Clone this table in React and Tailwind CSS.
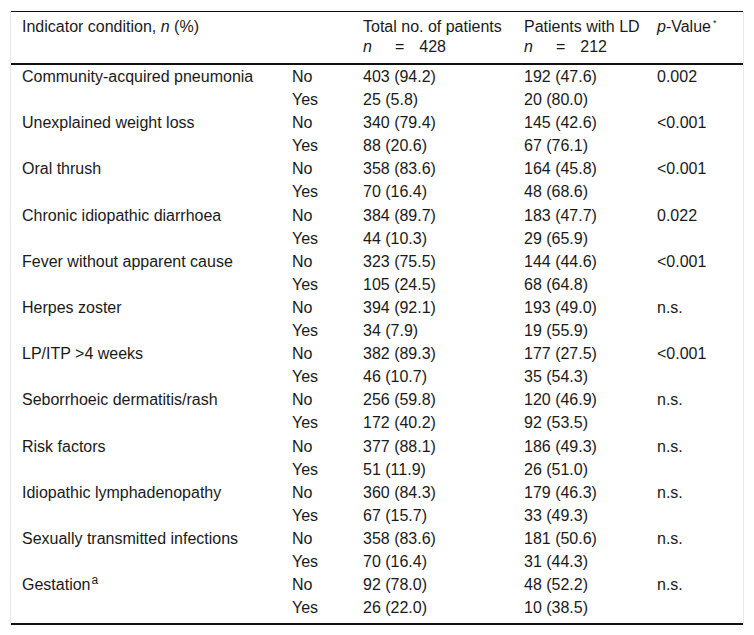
import React from "react";

const rows = [
  ["Community-acquired pneumonia", "403 (94.2)", "192 (47.6)", "0.002", "25 (5.8)", "20 (80.0)"],
  ["Unexplained weight loss", "340 (79.4)", "145 (42.6)", "<0.001", "88 (20.6)", "67 (76.1)"],
  ["Oral thrush", "358 (83.6)", "164 (45.8)", "<0.001", "70 (16.4)", "48 (68.6)"],
  ["Chronic idiopathic diarrhoea", "384 (89.7)", "183 (47.7)", "0.022", "44 (10.3)", "29 (65.9)"],
  ["Fever without apparent cause", "323 (75.5)", "144 (44.6)", "<0.001", "105 (24.5)", "68 (64.8)"],
  ["Herpes zoster", "394 (92.1)", "193 (49.0)", "n.s.", "34 (7.9)", "19 (55.9)"],
  ["LP/ITP >4 weeks", "382 (89.3)", "177 (27.5)", "<0.001", "46 (10.7)", "35 (54.3)"],
  ["Seborrhoeic dermatitis/rash", "256 (59.8)", "120 (46.9)", "n.s.", "172 (40.2)", "92 (53.5)"],
  ["Risk factors", "377 (88.1)", "186 (49.3)", "n.s.", "51 (11.9)", "26 (51.0)"],
  ["Idiopathic lymphadenopathy", "360 (84.3)", "179 (46.3)", "n.s.", "67 (15.7)", "33 (49.3)"],
  ["Sexually transmitted infections", "358 (83.6)", "181 (50.6)", "n.s.", "70 (16.4)", "31 (44.3)"],
  ["Gestation", "92 (78.0)", "48 (52.2)", "n.s.", "26 (22.0)", "10 (38.5)"],
];

const cell = "pl-[11px] pr-0 py-0 h-[23.1px] leading-[23.1px] text-left align-middle whitespace-nowrap";
const head = "pl-[11px] pt-[5px] pb-[6px] leading-[20px] font-normal text-left align-top whitespace-nowrap";

function NCount({ value }) {
  return (
    <div className="whitespace-nowrap">
      <i>n</i>
      <span className="ml-[23px]">=</span>
      <span className="ml-[15px]">{value}</span>
    </div>
  );
}

export default function App() {
  return (
    <div
      className="bg-white w-[754px] h-[635px] pt-[11px] text-[16px] text-[#1a1a1a]"
      style={{ fontFamily: '"Liberation Sans", Arial, sans-serif' }}
    >
      <div className="ml-[10px] w-[734px] border-x border-[#e8e8e8]">
        <div className="border-t border-[#111] border-b-2 border-b-[#111] pb-[4px]">
          <table className="w-full table-fixed border-collapse">
            <colgroup>
              <col className="w-[270px]" />
              <col className="w-[71px]" />
              <col className="w-[161px]" />
              <col className="w-[133px]" />
              <col />
            </colgroup>
            <thead>
              <tr className="border-b-2 border-[#111]">
                <th className={head}>
                  Indicator condition, <i>n</i> (%)
                </th>
                <th />
                <th className={head}>
                  <div>Total no. of patients</div>
                  <NCount value="428" />
                </th>
                <th className={head}>
                  <div>Patients with LD</div>
                  <NCount value="212" />
                </th>
                <th className={head}>
                  <i>p</i>-Value<sup className="text-[9px] relative -top-[6px] ml-[2px]">*</sup>
                </th>
              </tr>
            </thead>
            <tbody>
              {rows.map(([name, noTotal, noLd, p, yesTotal, yesLd]) => (
                <React.Fragment key={name}>
                  <tr>
                    <td className={cell}>
                      {name}
                      {name === "Gestation" && <sup className="text-[12px] ml-[1px]">a</sup>}
                    </td>
                    <td className={cell}>No</td>
                    <td className={cell}>{noTotal}</td>
                    <td className={cell}>{noLd}</td>
                    <td className={cell}>{p}</td>
                  </tr>
                  <tr>
                    <td className={cell} />
                    <td className={cell}>Yes</td>
                    <td className={cell}>{yesTotal}</td>
                    <td className={cell}>{yesLd}</td>
                    <td className={cell} />
                  </tr>
                </React.Fragment>
              ))}
            </tbody>
          </table>
        </div>
      </div>
    </div>
  );
}
